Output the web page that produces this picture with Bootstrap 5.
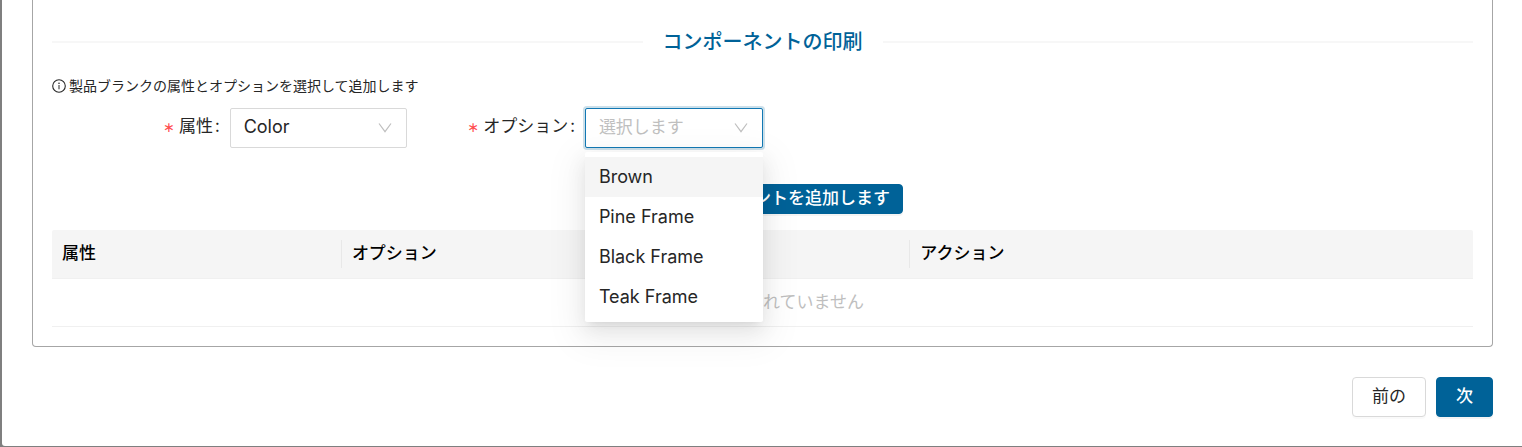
<!DOCTYPE html>
<html lang="ja">
<head>
<meta charset="utf-8">
<meta name="viewport" content="width=device-width, initial-scale=1">
<title>コンポーネントの印刷</title>
<link rel="stylesheet" href="https://cdn.jsdelivr.net/npm/bootstrap@5.3.0/dist/css/bootstrap.min.css">
<style>
  :root { --brand: #006298; --ink: #262626; --rule: #f0f0f0; --hint: #bfbfbf; }
  body { background: #7f7f7f; color: var(--ink); font: 17px/26px Inter, "Noto Sans CJK JP", sans-serif; padding: 0 0 1px 2px; }
  .dialog-sheet { background: #fff; border-bottom-left-radius: 3px; padding: 0 29px 29px 30px; }
  .panel-box { border: 1px solid #a6a6a6; border-top: 0; border-radius: 0 0 4px 4px; padding: 27px 19px 19px; }
  .section-title { color: var(--brand); font-size: 20px; line-height: 30px; gap: 20px; margin-bottom: 19px; font-weight: 500; }
  .section-title::before, .section-title::after { content: ""; flex: 1; height: 2px; background: #f7f7f7; }
  .hint-line { font-size: 14px; line-height: 20px; gap: 3px; }
  .field-label { padding-right: 10px; }
  .field-label .required-mark { color: #ff4d4f; font-family: "DejaVu Sans", sans-serif; font-size: 14px; margin-right: 4px; }
  .field-label .label-colon { margin-left: 2px; font-family: "Noto Sans CJK JP", sans-serif; }
  .field-box { height: 40px; padding: 0 40px 2px 13px; border: 1px solid #d9d9d9; border-radius: 2px; background: #fff; color: var(--ink); appearance: none; font-size: 18px; }
  .field-box:invalid { color: var(--hint); font-size: 17px; }
  .field-box.is-open { border-color: #1278b4; box-shadow: 0 0 0 2px rgba(0,98,152,.2); outline: 0; }
  .chevron { position: absolute; right: 15px; top: 13px; pointer-events: none; }
  .option-menu { top: 44px; left: 0; width: 100%; min-width: 0; padding: 5px 0; border: 0; border-radius: 2px; font-size: 18px;
    box-shadow: 0 4px 8px -5px rgba(0,0,0,.12), 0 8px 20px rgba(0,0,0,.08), 0 11px 35px 10px rgba(0,0,0,.05); }
  .option-menu .dropdown-item { padding: 7px 14px; color: var(--ink); line-height: 26px; }
  .option-menu .dropdown-item.active { background: #f5f5f5; }
  .action-btn { border-radius: 4px; font-size: 17px; line-height: 26px; height: 40px; padding: 5px 19px 7px; box-shadow: 0 2px 0 rgba(0,0,0,.02); color: var(--ink); border: 1px solid #d9d9d9; background: #fff; }
  .action-btn.is-brand { background: var(--brand); border-color: var(--brand); color: #fff; font-weight: 500; box-shadow: 0 2px 0 rgba(0,0,0,.045); }
  .action-btn.is-short { height: 30px; padding: 0 12px 2px; }
  .add-line { margin-top: 36px; }
  .footer-bar { margin-top: 30px; gap: 10px; }
  .parts-table { margin: 16px 0 0; }
  .parts-table > :not(caption) > * > * { padding: 10px 10px 12px; border-bottom: 1px solid var(--rule); }
  .parts-table thead th { background: #f5f5f5; color: #000; font-weight: 500; position: relative; }
  .parts-table thead th:first-child { width: 20.4%; border-top-left-radius: 2px; }
  .parts-table thead th:nth-child(2) { width: 40%; }
  .parts-table thead th:last-child { border-top-right-radius: 2px; }
  .parts-table thead th:not(:last-child)::after { content: ""; position: absolute; right: 0; top: 10px; bottom: 10px; width: 1px; background: #e8e8e8; }
  .parts-table > tbody > tr > td { color: var(--hint); padding-bottom: 11px; }
</style>
</head>
<body>
<main class="dialog-sheet">
  <section class="panel-box">
    <h2 class="section-title d-flex align-items-center">コンポーネントの印刷</h2>
    <div class="hint-line d-flex align-items-center">
      <svg width="14" height="14" viewBox="0 0 14 14" fill="none" stroke="currentColor" aria-hidden="true"><circle cx="7" cy="7" r="6.3" stroke-width="1.1"/><path d="M7 6v4.3"/><circle cx="7" cy="4.2" r=".8" fill="currentColor" stroke="none"/></svg>
      <span>製品ブランクの属性とオプションを選択して追加します</span>
    </div>
    <form class="row g-0 mt-2 pt-1">
      <div class="col-3 d-flex align-items-center">
        <label class="field-label w-50 text-end text-nowrap pb-1" for="attr"><span class="required-mark">∗</span>属性<span class="label-colon">:</span></label>
        <div class="w-50 position-relative">
          <select class="field-box w-100 d-block" id="attr" name="attr"><option>Color</option></select>
          <svg class="chevron" width="14" height="14" viewBox="0 0 14 14" fill="none" stroke="#bfbfbf" stroke-width="1.2" aria-hidden="true"><path d="M1 2.5l6 8.2 6-8.2"/></svg>
        </div>
      </div>
      <div class="col-3 d-flex align-items-center">
        <label class="field-label w-50 text-end text-nowrap pb-1" for="opt"><span class="required-mark">∗</span>オプション<span class="label-colon">:</span></label>
        <div class="w-50 position-relative">
          <select class="field-box is-open w-100 d-block" id="opt" name="opt" required><option value="">選択します</option></select>
          <svg class="chevron" width="14" height="14" viewBox="0 0 14 14" fill="none" stroke="#bfbfbf" stroke-width="1.2" aria-hidden="true"><path d="M1 2.5l6 8.2 6-8.2"/></svg>
          <div class="dropdown-menu option-menu show">
            <button type="button" class="dropdown-item active">Brown</button>
            <button type="button" class="dropdown-item">Pine Frame</button>
            <button type="button" class="dropdown-item">Black Frame</button>
            <button type="button" class="dropdown-item">Teak Frame</button>
          </div>
        </div>
      </div>
    </form>
    <div class="add-line d-flex justify-content-center">
      <button type="button" class="action-btn is-brand is-short">印刷コンポーネントを追加します</button>
    </div>
    <table class="table parts-table">
      <thead><tr><th scope="col">属性</th><th scope="col">オプション</th><th scope="col">アクション</th></tr></thead>
      <tbody><tr><td colspan="3" class="text-center">項目が追加されていません</td></tr></tbody>
    </table>
  </section>
  <div class="footer-bar d-flex justify-content-end">
    <button type="button" class="action-btn">前の</button>
    <button type="button" class="action-btn is-brand">次</button>
  </div>
</main>
<script src="https://cdn.jsdelivr.net/npm/bootstrap@5.3.0/dist/js/bootstrap.bundle.min.js"></script>
</body>
</html>
